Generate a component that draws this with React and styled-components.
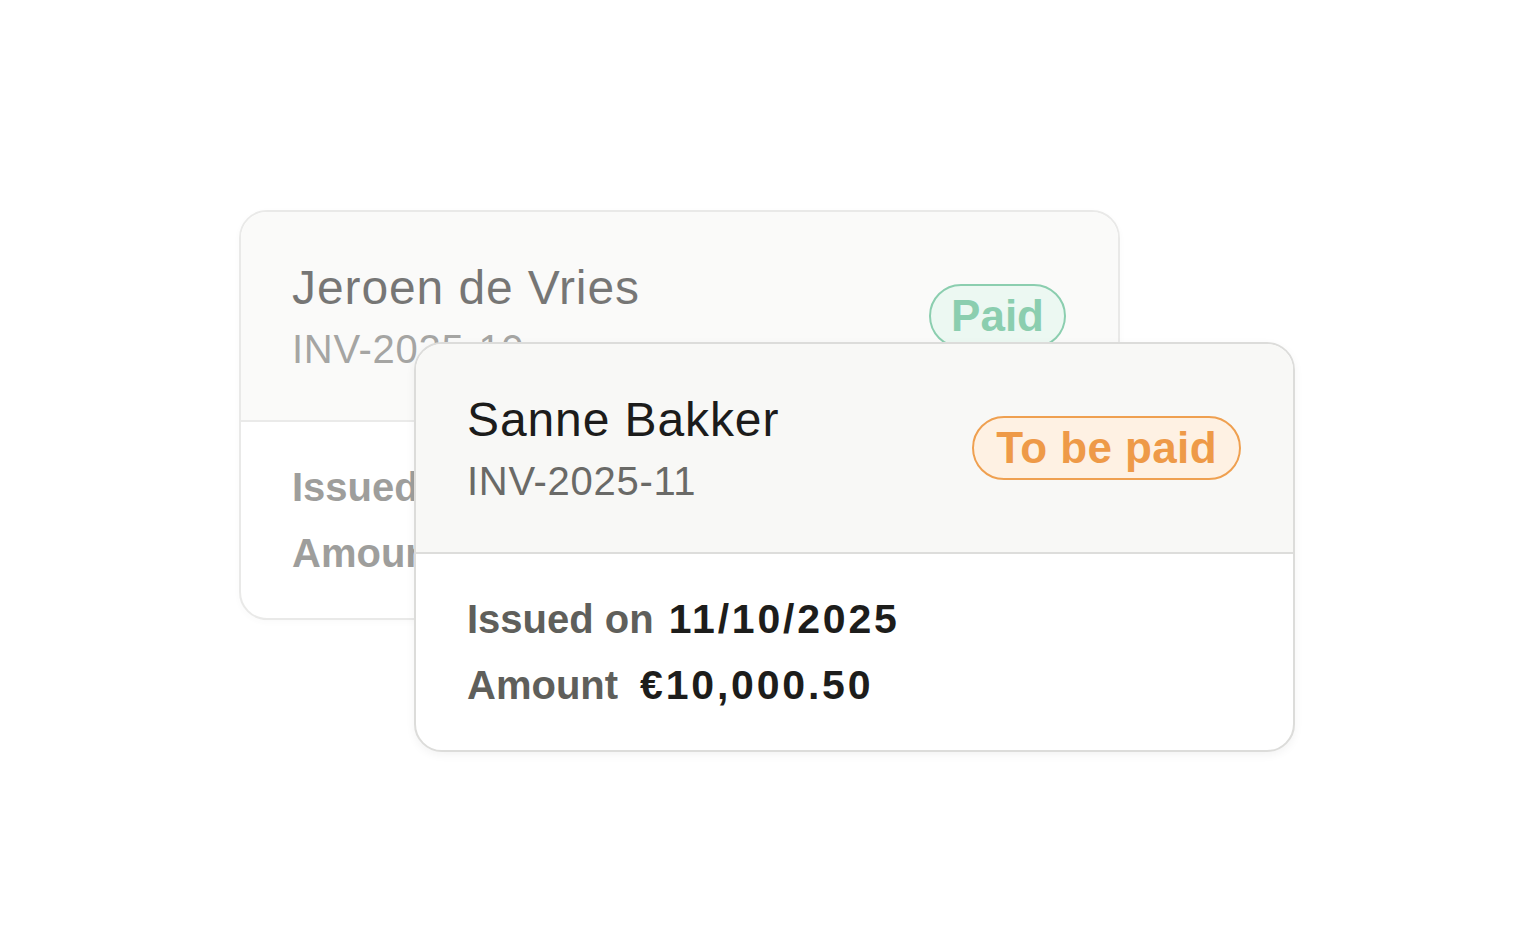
import React from "react";
import styled, { createGlobalStyle } from "styled-components";

const Global = createGlobalStyle`
  html, body { margin: 0; padding: 0; background: #ffffff; }
  body { font-family: "Liberation Sans", Arial, sans-serif; }
  * { box-sizing: border-box; }
`;

const Page = styled.div`
  width: 1537px;
  height: 929px;
  display: flex;
  justify-content: flex-start;
  align-items: flex-start;
  padding: 210px 0 0 239px;
  background: #ffffff;
  overflow: hidden;
`;

const Stack = styled.div`
  display: grid;
  grid-template-columns: auto;
  grid-template-rows: auto;
`;

const Card = styled.div`
  grid-area: 1 / 1;
  width: 881px;
  height: 410px;
  border: 2px solid #dcdcda;
  border-radius: 28px;
  overflow: hidden;
  background: #ffffff;
  display: flex;
  flex-direction: column;
  opacity: ${(p) => (p.$faded ? 0.6 : 1)};
  margin-left: ${(p) => (p.$front ? "175px" : "0")};
  margin-top: ${(p) => (p.$front ? "132px" : "0")};
  box-shadow: ${(p) => (p.$front ? "0 3px 10px rgba(0,0,0,0.05)" : "0 2px 6px rgba(0,0,0,0.03)")};
  z-index: ${(p) => (p.$front ? 2 : 1)};
`;

const Header = styled.div`
  height: 210px;
  flex: none;
  background: #f8f8f6;
  border-bottom: 2px solid #dddddb;
  display: flex;
  align-items: center;
  justify-content: space-between;
  padding: 0 52px 0 51px;
`;

const Titles = styled.div`
  display: flex;
  flex-direction: column;
  gap: 9px;
`;

const Name = styled.div`
  font-size: 48px;
  line-height: 56px;
  font-weight: 400;
  color: #1c1c1b;
  letter-spacing: 0.9px;
`;

const InvoiceNo = styled.div`
  font-size: 40px;
  line-height: 48px;
  font-weight: 400;
  color: #6a6a67;
  letter-spacing: 0.7px;
`;

const Badge = styled.div`
  height: 64px;
  border-radius: 32px;
  border: 2px solid ${(p) => p.$border};
  background: ${(p) => p.$bg};
  color: ${(p) => p.$color};
  font-size: 44px;
  font-weight: 700;
  line-height: 60px;
  letter-spacing: ${(p) => p.$spacing};
  padding: 0 ${(p) => p.$pad};
  white-space: nowrap;
`;

const Body = styled.div`
  flex: 1;
  display: flex;
  flex-direction: column;
  justify-content: center;
  gap: 18px;
  padding: 0 51px;
`;

const Row = styled.div`
  display: flex;
  align-items: baseline;
  gap: ${(p) => p.$gap || "15px"};
  font-size: 40px;
  line-height: 48px;
  font-weight: 700;
  white-space: nowrap;
`;

const Label = styled.span`
  color: #5f5f5b;
`;

const Value = styled.span`
  color: #1d1d1b;
  font-size: 41px;
  letter-spacing: 2.8px;
`;

const badgeStyles = {
  paid: { border: "#3fae7b", bg: "#e1f5eb", color: "#3fae7b", text: "Paid", spacing: "0px", pad: "20px" },
  due: { border: "#efa050", bg: "#fef1e3", color: "#ee9a48", text: "To be paid", spacing: "0.4px", pad: "22px" },
};

function InvoiceCard({ name, number, status, issued, amount, front, faded }) {
  const b = badgeStyles[status];
  return (
    <Card $front={front} $faded={faded}>
      <Header>
        <Titles>
          <Name>{name}</Name>
          <InvoiceNo>{number}</InvoiceNo>
        </Titles>
        <Badge $border={b.border} $bg={b.bg} $color={b.color} $spacing={b.spacing} $pad={b.pad}>
          {b.text}
        </Badge>
      </Header>
      <Body>
        <Row>
          <Label>Issued on</Label>
          <Value>{issued}</Value>
        </Row>
        <Row $gap="22px">
          <Label>Amount</Label>
          <Value>{amount}</Value>
        </Row>
      </Body>
    </Card>
  );
}

export default function App() {
  return (
    <>
      <Global />
      <Page>
        <Stack>
          <InvoiceCard
            faded
            name="Jeroen de Vries"
            number="INV-2025-10"
            status="paid"
            issued="10/10/2025"
            amount="€4,250.00"
          />
          <InvoiceCard
            front
            name="Sanne Bakker"
            number="INV-2025-11"
            status="due"
            issued="11/10/2025"
            amount="€10,000.50"
          />
        </Stack>
      </Page>
    </>
  );
}
